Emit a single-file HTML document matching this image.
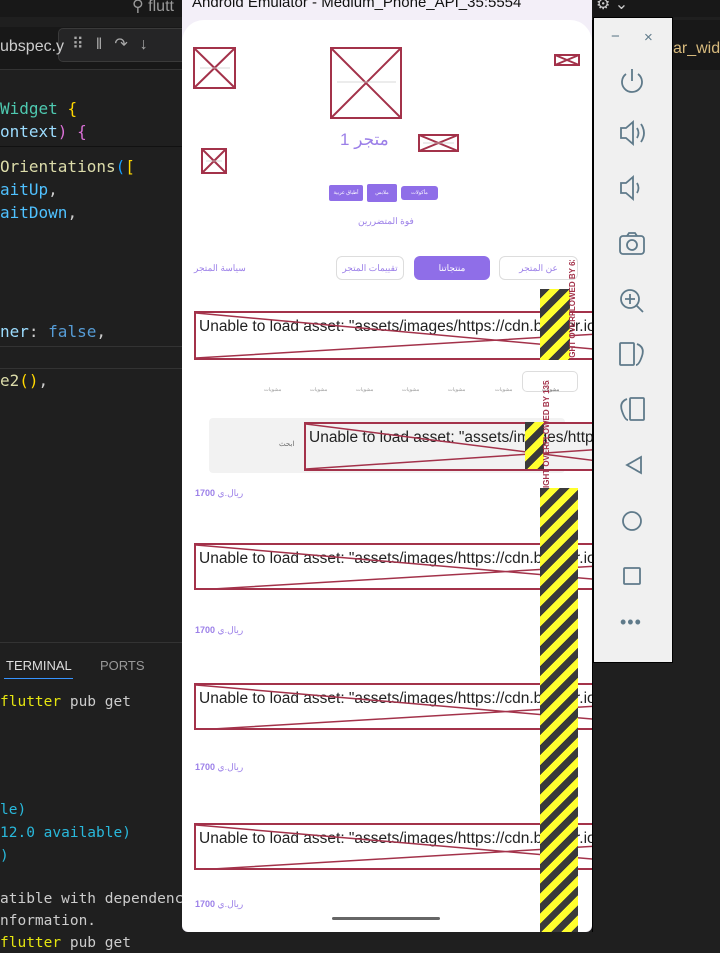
<!DOCTYPE html>
<html><head><meta charset="utf-8">
<style>
*{margin:0;padding:0;box-sizing:border-box}
body{width:720px;height:948px;overflow:hidden;background:#1f1f1f;position:relative;font-family:"Liberation Sans","Noto Sans CJK SC",sans-serif}
.a{position:absolute}
.code{font-family:"DejaVu Sans Mono","Liberation Mono",monospace;font-size:16px;white-space:pre;line-height:20px}
.term{font-size:14.5px}
.err{position:absolute;border:2px solid #a3324a;background:#fff;overflow:hidden}
.err span{position:absolute;left:3px;top:5px;font-size:15.5px;color:#222;white-space:nowrap}
.stripe{position:absolute;background:repeating-linear-gradient(135deg,#3a3a3a 0 7px,#ffff2e 7px 14px)}
.ar{font-family:"Liberation Sans","Noto Sans CJK SC",sans-serif;direction:rtl}
.tab{position:absolute;font-size:9px;color:#999;}
</style></head><body>
<div class="a" style="left:0;top:0;width:720px;height:17px;background:#181818"></div>
<div class="a" style="left:132px;top:-4px;color:#999;font-size:16px">&#9906; flutt</div>
<div class="a" style="left:0;top:27px;width:182px;height:42px;background:#181818"></div>
<div class="a" style="left:58px;top:28px;width:130px;height:34px;background:#252526;border:1px solid #3a3a3a;border-radius:5px"></div>
<div class="a" style="left:72px;top:34px;color:#aaa;font-size:16px;letter-spacing:12px">⠿‖↷↓</div>
<div class="a" style="left:0;top:38px;color:#ccc;font-size:16px">ubspec.y</div>
<div class="a" style="left:0;top:69px;width:182px;height:1px;background:#333"></div>
<div class="a" style="left:0;top:146px;width:182px;height:1px;background:#111"></div>
<div class="a code" style="left:0;top:99px;color:#4ec9b0">Widget <span style="color:#ffd700">{</span></div>
<div class="a code" style="left:0;top:122px;color:#9cdcfe">ontext<span style="color:#da70d6">)</span> <span style="color:#da70d6">{</span></div>
<div class="a code" style="left:0;top:157px;color:#dcdcaa">Orientations<span style="color:#179fff">(</span><span style="color:#ffd700">[</span></div>
<div class="a code" style="left:0;top:180px;color:#4fc1ff">aitUp<span style="color:#ccc">,</span></div>
<div class="a code" style="left:0;top:203px;color:#4fc1ff">aitDown<span style="color:#ccc">,</span></div>
<div class="a code" style="left:0;top:322px;color:#9cdcfe">ner<span style="color:#ccc">: </span><span style="color:#569cd6">false</span><span style="color:#ccc">,</span></div>
<div class="a" style="left:0;top:346px;width:182px;height:1px;background:#333"></div>
<div class="a" style="left:0;top:368px;width:182px;height:1px;background:#333"></div>
<div class="a code" style="left:0;top:371px;color:#dcdcaa">e2<span style="color:#ffd700">()</span><span style="color:#ccc">,</span></div>
<div class="a" style="left:0;top:642px;width:182px;height:1px;background:#333"></div>
<div class="a" style="left:6px;top:658px;color:#ddd;font-size:13px">TERMINAL</div>
<div class="a" style="left:4px;top:678px;width:69px;height:1px;background:#3794ff"></div>
<div class="a" style="left:100px;top:658px;color:#999;font-size:13px">PORTS</div>
<div class="a code term" style="left:0;top:692px;color:#e5e510">flutter <span style="color:#ccc">pub get</span></div>
<div class="a code term" style="left:0;top:800px;color:#29b8db">le)</div>
<div class="a code term" style="left:0;top:823px;color:#29b8db">12.0 available)</div>
<div class="a code term" style="left:0;top:846px;color:#29b8db">)</div>
<div class="a code term" style="left:0;top:889px;color:#ccc">atible with dependenc</div>
<div class="a code term" style="left:0;top:911px;color:#ccc">nformation.</div>
<div class="a code term" style="left:0;top:933px;color:#e5e510">flutter <span style="color:#ccc">pub get</span></div>
<div class="a" style="left:673px;top:20px;width:47px;height:50px;background:#181818"></div>
<div class="a" style="left:673px;top:40px;color:#d7ba7d;font-size:16px">ar_widg</div>
<div class="a" style="left:596px;top:-6px;color:#ccc;font-size:16px">⚙ ⌄</div>

<div class="a" style="left:182px;top:0;width:410px;height:20px;background:#f3eff8"></div>
<div class="a" style="left:192px;top:-6px;font-size:15px;color:#111">Android Emulator - Medium_Phone_API_35:5554</div>
<div class="a" style="left:182px;top:20px;width:410px;height:912px;background:#f3eff8;border-radius:0 0 6px 6px"></div>
<div class="a" style="left:182px;top:20px;width:410px;height:912px;background:#fff;border-radius:22px 22px 8px 8px;overflow:hidden">
<svg class="a" style="left:0;top:0" width="410" height="912">
 <g stroke="#a3324a" stroke-width="2" fill="none">
  <rect x="12" y="28" width="41" height="40"/><path d="M12 28L53 68M53 28L12 68"/>
  <rect x="149" y="28" width="70" height="70"/><path d="M149 28L219 98M219 28L149 98"/>
  <rect x="373" y="35" width="24" height="10"/><path d="M373 35L397 45M397 35L373 45"/>
  <rect x="20" y="129" width="24" height="24"/><path d="M20 129L44 153M44 129L20 153"/>
  <rect x="237" y="115" width="39" height="16"/><path d="M237 115L276 131M276 115L237 131"/>
 </g>
 <g stroke="#ccc" stroke-width="0.7"><path d="M18 48H48M155 62H214M241 123H272M24 141H40"/></g>
</svg>
<div class="a ar" style="left:158px;top:110px;font-size:17px;color:#9b7fe8">متجر 1</div>
<div class="a" style="left:147px;top:165px;width:34px;height:16px;background:#8f6ee8;border-radius:2px;color:#fff;font-size:5px;text-align:center;line-height:16px">أطباق عربية</div>
<div class="a" style="left:185px;top:164px;width:30px;height:18px;background:#8f6ee8;border-radius:2px;color:#fff;font-size:5px;text-align:center;line-height:18px">ملابس</div>
<div class="a" style="left:219px;top:166px;width:37px;height:14px;background:#8f6ee8;border-radius:3px;color:#fff;font-size:5px;text-align:center;line-height:14px">مأكولات</div>
<div class="a ar" style="left:176px;top:196px;font-size:9px;color:#9b7fe8">فوة المتضررين</div>
<div class="a ar" style="left:12px;top:243px;font-size:9px;color:#9b7fe8">سياسة المتجر</div>
<div class="a" style="left:154px;top:236px;width:68px;height:24px;border:1px solid #ddd;border-radius:6px;font-size:9px;color:#9b7fe8;text-align:center;line-height:22px">تقييمات المتجر</div>
<div class="a" style="left:232px;top:236px;width:76px;height:24px;background:#8f6ee8;border-radius:6px;font-size:9px;color:#fff;text-align:center;line-height:24px">منتجاتنا</div>
<div class="a" style="left:317px;top:236px;width:79px;height:24px;border:1px solid #ddd;border-radius:6px;font-size:9px;color:#9b7fe8;text-align:center;line-height:22px">عن المتجر</div>
<div class="a" style="left:340px;top:351px;width:56px;height:21px;border:1px solid #ddd;border-radius:5px"></div>
<div class="tab" style="left:82px;top:367px;font-size:5px">مشويات</div>
<div class="tab" style="left:128px;top:367px;font-size:5px">مشويات</div>
<div class="tab" style="left:174px;top:367px;font-size:5px">مشويات</div>
<div class="tab" style="left:220px;top:367px;font-size:5px">مشويات</div>
<div class="tab" style="left:266px;top:367px;font-size:5px">مشويات</div>
<div class="tab" style="left:313px;top:367px;font-size:5px">مشويات</div>
<div class="tab" style="left:360px;top:367px;font-size:5px;color:#666">مشويات</div>
<div class="a" style="left:27px;top:398px;width:356px;height:55px;background:#f2f2f2;border-radius:4px"></div>
<div class="a" style="left:97px;top:420px;font-size:7px;color:#666">ابحث</div>
<div class="err" style="left:12px;top:291px;width:420px;height:49px;"><span>Unable to load asset: "assets/images/https://cdn.builder.io/a</span><svg class="a" style="left:0;top:0" width="420" height="49"><path d="M0 45L420 20M0 0L420 38" stroke="#a3324a" stroke-width="1.5"/></svg></div>
<div class="err" style="left:122px;top:402px;width:300px;height:49px;background:#f2f2f2"><span>Unable to load asset: "assets/images/https://</span><svg class="a" style="left:0;top:0" width="300" height="49"><path d="M0 45L300 25M0 0L300 38" stroke="#a3324a" stroke-width="1.5"/></svg></div>
<div class="err" style="left:12px;top:523px;width:420px;height:47px;"><span>Unable to load asset: "assets/images/https://cdn.builder.io/a</span><svg class="a" style="left:0;top:0" width="420" height="47"><path d="M0 45L420 20M0 0L420 36" stroke="#a3324a" stroke-width="1.5"/></svg></div>
<div class="err" style="left:12px;top:663px;width:420px;height:47px;"><span>Unable to load asset: "assets/images/https://cdn.builder.io/a</span><svg class="a" style="left:0;top:0" width="420" height="47"><path d="M0 45L420 20M0 0L420 36" stroke="#a3324a" stroke-width="1.5"/></svg></div>
<div class="err" style="left:12px;top:803px;width:420px;height:47px;"><span>Unable to load asset: "assets/images/https://cdn.builder.io/a</span><svg class="a" style="left:0;top:0" width="420" height="47"><path d="M0 45L420 20M0 0L420 36" stroke="#a3324a" stroke-width="1.5"/></svg></div>
<div class="a" style="left:13px;top:468px;font-size:9px;color:#9b7fe8"><b>1700</b> ريال.ي</div>
<div class="a" style="left:13px;top:605px;font-size:9px;color:#9b7fe8"><b>1700</b> ريال.ي</div>
<div class="a" style="left:13px;top:742px;font-size:9px;color:#9b7fe8"><b>1700</b> ريال.ي</div>
<div class="a" style="left:13px;top:879px;font-size:9px;color:#9b7fe8"><b>1700</b> ريال.ي</div>
<div class="stripe" style="left:358px;top:269px;width:30px;height:71px"></div>
<div class="stripe" style="left:343px;top:402px;width:19px;height:47px"></div>
<div class="stripe" style="left:358px;top:468px;width:38px;height:444px"></div>
<div class="a" style="left:386px;top:240px;width:12px;height:100px;writing-mode:vertical-rl;transform:rotate(180deg);font-size:8px;font-weight:bold;color:#a3324a;white-space:nowrap;overflow:hidden">IGHT OVERFLOWED BY 6341 PIXELS</div>
<div class="a" style="left:360px;top:360px;width:12px;height:108px;writing-mode:vertical-rl;transform:rotate(180deg);font-size:8px;font-weight:bold;color:#a3324a;white-space:nowrap;overflow:hidden">IGHT OVERFLOWED BY 1352 PIXELS</div>
<div class="a" style="left:150px;top:897px;width:108px;height:3px;background:#666;border-radius:2px"></div>
</div>
<div class="a" style="left:592px;top:20px;width:1px;height:912px;background:#000"></div>

<div class="a" style="left:593px;top:17px;width:80px;height:646px;background:#f0f0f0;border:1px solid #000"></div>
<div class="a" style="left:611px;top:28px;color:#5f7a8a;font-size:15px">−</div>
<div class="a" style="left:644px;top:29px;color:#5f7a8a;font-size:15px">×</div>
<svg class="a" style="left:593px;top:17px" width="80" height="646" fill="none" stroke="#5f7a8a" stroke-width="1.8">
 <path d="M39 52V64M33 57A10 10 0 1 0 45 57"/>
 <path d="M28 111h5l7-6v22l-7-6h-5z M44 111q3 5 0 10M48 107q6 9 0 18"/>
 <path d="M28 166h5l7-6v22l-7-6h-5z M44 166q3 5 0 10"/>
 <rect x="27" y="219" width="24" height="18" rx="3"/><circle cx="39" cy="228" r="5"/><path d="M34 219l2-3h6l2 3"/>
 <circle cx="37" cy="282" r="9"/><path d="M37 277v10M32 282h10M43 288l7 7"/>
 <rect x="27" y="326" width="14" height="22" rx="1"/><path d="M44 327q8 3 5 12t-6 9"/>
 <rect x="37" y="381" width="14" height="22" rx="1"/><path d="M34 382q-8 3-5 12t6 9"/>
 <path d="M48 440l-14 8 14 8z"/>
 <circle cx="39" cy="504" r="9"/>
 <rect x="31" y="551" width="16" height="16" rx="1"/>
</svg>
<div class="a" style="left:620px;top:612px;color:#5f7a8a;font-size:18px;letter-spacing:1px">•••</div>
</body></html>
